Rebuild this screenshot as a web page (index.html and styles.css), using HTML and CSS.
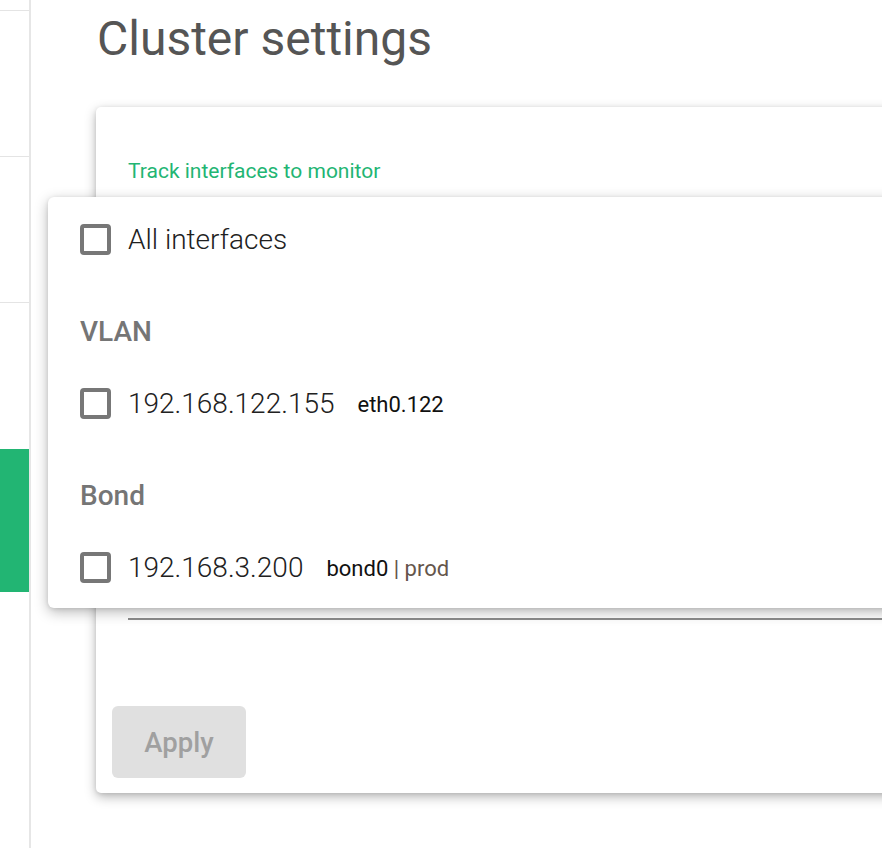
FILE: index.html
```html
<!DOCTYPE html>
<html lang="en">
<head>
<meta charset="utf-8">
<title>Cluster settings</title>
<link rel="stylesheet" href="styles.css">
</head>
<body>
<div class="layout">
  <aside class="sidebar">
    <div class="nav-item nav-top"></div>
    <div class="nav-item"></div>
    <div class="nav-item"></div>
    <div class="nav-spacer"></div>
    <div class="nav-active"></div>
  </aside>
  <main class="main">
    <h1 class="title">Cluster settings</h1>
    <section class="card">
      <div class="field">
        <div class="field-label">Track interfaces to monitor</div>
        <div class="select"></div>
      </div>
      <div class="actions">
        <button class="btn" disabled>Apply</button>
      </div>
    </section>
  </main>
  <div class="menu">
    <label class="option option-first">
      <span class="checkbox"></span>
      <span class="opt-text">All interfaces</span>
    </label>
    <div class="group">
      <div class="group-title">VLAN</div>
      <label class="option">
        <span class="checkbox"></span>
        <span class="opt-text">192.168.122.155</span>
        <span class="opt-sub">eth0.122</span>
      </label>
    </div>
    <div class="group">
      <div class="group-title">Bond</div>
      <label class="option">
        <span class="checkbox"></span>
        <span class="opt-text">192.168.3.200</span>
        <span class="opt-sub">bond0<span class="opt-extra"> | prod</span></span>
      </label>
    </div>
  </div>
</div>
</body>
</html>
```
FILE: styles.css
```css
html, body {
  margin: 0;
  padding: 0;
  overflow: hidden;
  background: #ffffff;
}
body {
  font-family: Roboto, "Noto Sans", sans-serif;
}
.layout {
  display: flex;
  position: relative;
  width: 882px;
  height: 848px;
}
.sidebar {
  width: 29px;
  flex: none;
  border-right: 2px solid #e6e6e6;
  display: flex;
  flex-direction: column;
}
.nav-item {
  height: 145px;
  border-bottom: 1px solid #e4e4e4;
}
.nav-top {
  height: 10px;
}
.nav-spacer {
  height: 146px;
}
.nav-active {
  height: 143px;
  background: #22b573;
}
.main {
  flex: 1;
  padding-left: 65px;
  min-width: 0;
}
.title {
  margin: 11px 0 0 1px;
  font-size: 48px;
  font-weight: 400;
  line-height: 56px;
  color: #555555;
}
.card {
  margin-top: 40px;
  width: 900px;
  background: #fff;
  border-radius: 5px;
  box-shadow: 0 4px 12px rgba(0, 0, 0, 0.28), 0 1px 4px rgba(0, 0, 0, 0.1);
  padding: 0 0 15px 0;
}
.field {
  padding: 53px 0 0 32px;
}
.field-label {
  font-size: 21px;
  line-height: 22px;
  color: #22b573;
}
.select {
  height: 436px;
  border-bottom: 2px solid #8c8c8c;
}
.actions {
  padding: 86px 0 0 16px;
}
.btn {
  width: 134px;
  height: 72px;
  border: none;
  border-radius: 6px;
  background: #e0e0e0;
  color: #a0a0a0;
  font-family: Roboto, sans-serif;
  font-size: 27.5px;
  font-weight: 500;
  padding: 0;
}
.menu {
  position: absolute;
  left: 48px;
  top: 197px;
  width: 860px;
  background: #fff;
  border-radius: 6px;
  box-shadow: 0 4px 14px rgba(0, 0, 0, 0.28), 0 1px 4px rgba(0, 0, 0, 0.1);
  padding: 10px 0 9px 0;
}
.option {
  display: flex;
  align-items: center;
  height: 64px;
  padding-left: 32px;
  margin-top: 14px;
}
.option-first {
  margin-top: 0;
}
.checkbox {
  width: 31px;
  height: 31px;
  box-sizing: border-box;
  border: 4px solid #777777;
  border-radius: 4px;
  flex: none;
}
.opt-text {
  margin-left: 17px;
  font-size: 28px;
  font-weight: 300;
  color: #212121;
}
.opt-sub {
  margin-left: 23px;
  font-size: 22px;
  font-weight: 400;
  color: #111111;
  margin-top: 2px;
}
.opt-extra {
  font-weight: 400;
  color: #65564c;
}
.group-title {
  padding: 36px 0 0 32px;
  line-height: 50px;
  height: 50px;
  font-size: 28px;
  font-weight: 500;
  color: #757575;
}
```
